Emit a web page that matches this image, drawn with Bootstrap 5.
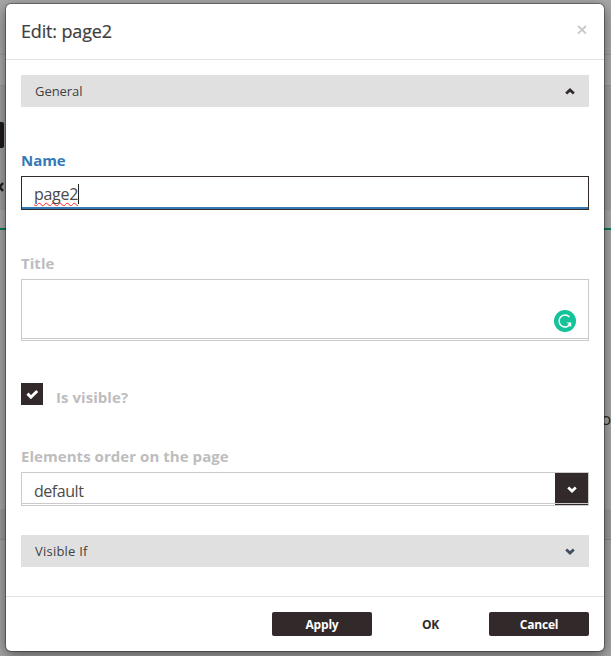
<!DOCTYPE html>
<html lang="en">
<head>
<meta charset="utf-8">
<meta name="viewport" content="width=device-width, initial-scale=1">
<title>Edit: page2</title>
<link href="https://cdn.jsdelivr.net/npm/bootstrap@5.3.0/dist/css/bootstrap.min.css" rel="stylesheet">
<style>
:root{--dark:#32292b;--line:#cacaca;--hint:#bdbdbd}
body{width:611px;height:656px;font-family:"Open Sans","Noto Sans",sans-serif;background:#a5a5a5;color:#404040}
.page-behind{inset:0;z-index:0}
.strip-top{height:54px;background:#a7a7a7}
.strip-nav{height:32px;background:#aaaaa8;border-top:1px solid #999;border-bottom:1px solid #999}
.strip-tools{height:124px;background:#a0a09f}
.strip-tabs{height:20px;background:#aaa;border-bottom:2px solid #087b61}
.strip-canvas{height:279px;background:#a7a7a6}
.strip-foot{height:31px;background:#9c9c9c;border-bottom:1px solid #8d8d8d}
.peek-btn{left:-10px;top:122px;width:14px;height:26px;background:#1f1a1b;border-radius:2px}
.peek-x{left:-5px;top:181px}
.peek-o{left:601px;top:407px;font-size:17px;line-height:24px;color:#292929}
.dialog-box{z-index:1;width:598px;height:647px;margin:4px 0 0 6px;border-radius:5px;background:#fff;box-shadow:0 0 0 1px rgba(0,0,0,.32),0 4px 14px rgba(0,0,0,.5)}
.dialog-box .modal-header{height:56px;padding:0 15px;border-bottom:1px solid #e2e2e2;border-radius:0}
.dialog-box .modal-title{font-size:18px;line-height:24px;margin-top:-2px;font-weight:500;letter-spacing:-.15px;-webkit-text-stroke:.2px}
.close-x{width:20px;height:20px;margin:-4px -3px 0 0}
.dialog-box .modal-body{padding:15px 15px 0}
.section-bar{height:32px;padding:0 14px;background:#e0e0e0;font-size:13px;letter-spacing:-.05px}
.section-bar span{padding-top:2px}
.section-bar.closed-bar{margin-top:29px;letter-spacing:.22px}
.field-name{font-size:15px;line-height:20px;font-weight:700;color:var(--hint);letter-spacing:.05px}
.row-name,.row-title{margin-top:43px}
.row-name{color:#337ab7;letter-spacing:-.05px}
.row-check{margin-top:42px}
.row-check .field-name{margin:4px 0 0 13px}
.row-order{margin-top:39px}
.box{margin-top:6px;border:1px solid var(--line);font-size:16px;letter-spacing:-.45px;color:#4a4a4a}
.box::after{content:"";position:absolute;left:0;right:0;bottom:1px;height:1px;background:var(--line)}
.box.active-box{border-color:var(--dark);letter-spacing:-.3px}
.box.active-box::after{bottom:0;height:2px;background:#337ab7}
.one-line{height:34px;padding:3px 12px 0;line-height:30px}
.one-line.active-box{padding-top:1px}
.misspelt{line-height:22px;text-decoration:underline wavy #f22 1px;text-underline-offset:2px;text-decoration-skip-ink:none}
.caret{width:1px;height:20px;background:#222}
.area{height:62px}
.g-mark{right:12px;bottom:8px;width:22px;height:22px}
.tick{width:22px;height:22px;background:var(--dark)}
.drop{right:0;top:0;bottom:0;width:33px;background:var(--dark)}
.dialog-box .modal-footer{height:55px;padding:0 15px;gap:8.5px;border-top:1px solid #e2e2e2}
.dialog-box .modal-footer .btn{width:100px;height:24px;margin:0;padding:0;border:0;border-radius:2px;font-size:12px;line-height:25px;font-weight:700;letter-spacing:-.2px;color:var(--dark)}
.dialog-box .modal-footer .btn.solid{background:var(--dark);color:#fff}
</style>
</head>
<body class="position-relative overflow-hidden">
<div class="page-behind position-absolute overflow-hidden" aria-hidden="true">
  <div class="strip-top"></div><div class="strip-nav"></div><div class="strip-tools"></div>
  <div class="strip-tabs"></div><div class="strip-canvas"></div><div class="strip-foot"></div>
  <div class="peek-btn position-absolute"></div>
  <svg class="peek-x position-absolute" width="10" height="12"><path d="M1 2l7 8M8 2l-7 8" stroke="#222" stroke-width="2.6"/></svg>
  <span class="peek-o position-absolute">o</span>
</div>
<div class="dialog-box position-relative d-flex flex-column">
  <div class="modal-header d-flex align-items-center justify-content-between">
    <h4 class="modal-title">Edit: page2</h4>
    <svg class="close-x" viewBox="0 0 20 20"><path d="M6 6l8 7.6M14 6l-8 7.6" stroke="#c9c9c9" stroke-width="1.9"/></svg>
  </div>
  <div class="modal-body flex-grow-1">
    <div class="section-bar d-flex align-items-center justify-content-between"><span>General</span>
      <svg width="10" height="7"><path d="M1.2 5.5L5 1.9l3.8 3.6" fill="none" stroke="#32292b" stroke-width="2.7"/></svg></div>
    <div class="field-name row-name">Name</div>
    <div class="box active-box one-line position-relative d-flex align-items-center"><span class="misspelt">page2</span><i class="caret"></i></div>
    <div class="field-name row-title">Title</div>
    <div class="box area position-relative">
      <svg class="g-mark position-absolute" viewBox="0 0 22 22"><circle cx="11" cy="11" r="11" fill="#15c39a"/><path d="M15.4 6.9A6 6 0 1 0 16.6 13.4" fill="none" stroke="#fff" stroke-width="1.5"/><path d="M12.2 12.4h5v4.8l-1.5-1.6-1.2.6-.9-1.2 1.4-1z" fill="#fff"/></svg>
    </div>
    <div class="row-check d-flex"><span class="tick d-flex align-items-center justify-content-center"><svg width="14" height="12"><path d="M2.5 5.6l3.4 3.6L12.2 3" fill="none" stroke="#fff" stroke-width="3"/></svg></span>
      <span class="field-name">Is visible?</span></div>
    <div class="field-name row-order">Elements order on the page</div>
    <div class="box one-line position-relative"><span>default</span>
      <span class="drop position-absolute d-flex align-items-center justify-content-center"><svg width="10" height="7"><path d="M1.2 1.5L5 5.1l3.8-3.6" fill="none" stroke="#fff" stroke-width="2.7"/></svg></span></div>
    <div class="section-bar closed-bar d-flex align-items-center justify-content-between"><span>Visible If</span>
      <svg width="10" height="7"><path d="M1.2 1.5L5 5.1l3.8-3.6" fill="none" stroke="#404f5e" stroke-width="2.7"/></svg></div>
  </div>
  <div class="modal-footer d-flex align-items-center justify-content-end flex-nowrap">
    <button class="btn solid">Apply</button><button class="btn">OK</button><button class="btn solid">Cancel</button>
  </div>
</div>
<script src="https://cdn.jsdelivr.net/npm/bootstrap@5.3.0/dist/js/bootstrap.bundle.min.js"></script>
</body>
</html>
